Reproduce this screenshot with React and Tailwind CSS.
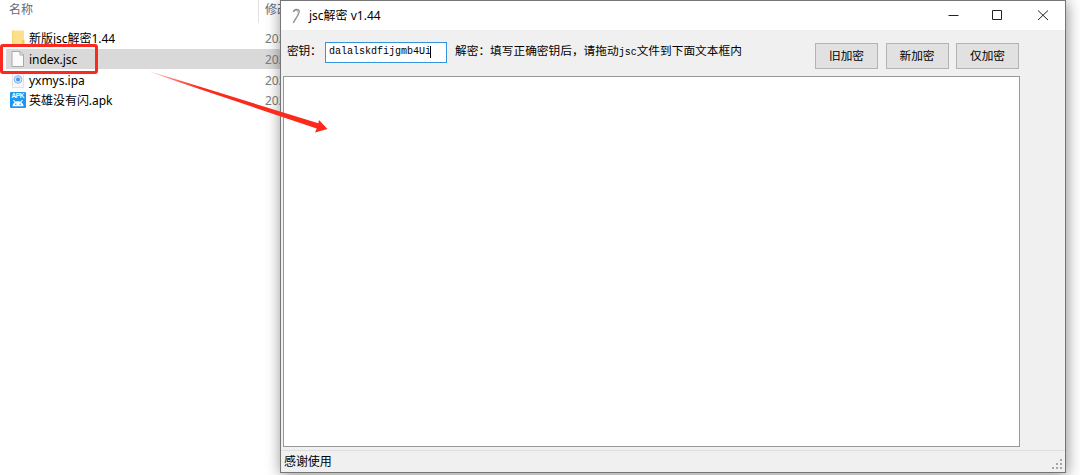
import React from "react";

const FolderIcon = () => (
  <svg width="16" height="16" viewBox="0 0 16 16">
    <path d="M2 .5h12v14.500H2z" fill="#ffe08a" />
    <path d="M12 10h2.500v5H12z" fill="#f3c95c" />
    <path d="M2 .5h1.200v14.500H2z" fill="#f8d675" />
  </svg>
);

const FileIcon = () => (
  <svg width="16" height="16" viewBox="0 0 16 16">
    <path d="M2 .5h8l3.500 3.500v11.500H2z" fill="#fafafa" stroke="#a0a0a0" strokeWidth=".9" />
    <path d="M10 .5v3.500h3.500" fill="none" stroke="#a0a0a0" strokeWidth=".9" />
  </svg>
);

const IpaIcon = () => (
  <svg width="16" height="16" viewBox="0 0 16 16">
    <path d="M2.500 .5h8l3 3v12h-11z" fill="#f7f7f7" stroke="#dcdcdc" strokeWidth=".8" />
    <circle cx="8" cy="7.500" r="3.800" fill="#d6e7fb" stroke="#7fb4f3" strokeWidth="1" />
    <rect x="6.200" y="5.700" width="3.600" height="3.600" rx="1" fill="#4c93ea" />
  </svg>
);

const ApkIcon = () => (
  <svg width="16" height="16" viewBox="0 0 16 16">
    <rect width="16" height="16" rx="1" fill="#1e96f0" />
    <text
      x="8"
      y="6.3"
      textAnchor="middle"
      textLength="13"
      fontSize="6.5"
      fontWeight="700"
      fontFamily="Liberation Sans, sans-serif"
      fill="#fff"
    >
      APK
    </text>
    <path d="M2.500 14.300a5.500 5 0 0 1 11 0z" fill="#fff" />
    <path d="M3.500 8l2 2.500M12.500 8l-2 2.500" stroke="#fff" strokeWidth="1.100" />
    <circle cx="5.800" cy="12.300" r=".7" fill="#1e96f0" />
    <circle cx="10.200" cy="12.300" r=".7" fill="#1e96f0" />
  </svg>
);

const files = [
  { name: "新版jsc解密1.44", icon: <FolderIcon /> },
  { name: "index.jsc", icon: <FileIcon />, selected: true },
  { name: "yxmys.ipa", icon: <IpaIcon /> },
  { name: "英雄没有闪.apk", icon: <ApkIcon /> },
];

const FileList = () => (
  <div className="w-[280px] shrink-0 overflow-hidden">
    <div className="flex h-[28px] text-[#5d6b82]">
      <div className="h-[23px] w-[259px] shrink-0 border-r border-[#e2e2e2] pl-[9px] leading-[19px]">
        名称
      </div>
      <div className="pl-[6px] leading-[19px] whitespace-nowrap">修改</div>
    </div>
    {files.map((file) => (
      <div key={file.name} className="flex h-[20.7px] pl-[6px]">
        <div
          className={`flex w-full items-center pl-[4px] ${file.selected ? "bg-[#d9d9d9]" : ""}`}
        >
          <div className="w-[19px] shrink-0">{file.icon}</div>
          <div className="relative z-10 mt-[2px] w-[236px] shrink-0 tracking-[-0.03px] text-black">
            {file.name}
          </div>
          <div className="mt-[2px] text-[#7d7d7d]">202</div>
        </div>
      </div>
    ))}
  </div>
);

const TitleBar = () => (
  <div className="flex h-[29px] shrink-0 items-center bg-white pl-[8px]">
    <svg width="16" height="18" viewBox="0 0 16 18">
      <path
        d="M4.500 5c0-3.500 6-3.500 5.700-.3C10 7 7 11 4.200 16"
        fill="none"
        stroke="#8b9689"
        strokeWidth="1.400"
      />
      <path d="M5.500 4.500c1-2 3.500-1.500 3 .8" fill="none" stroke="#59655a" strokeWidth=".6" />
    </svg>
    <div className="ml-[4px] grow text-black">jsc解密 v1.44</div>
    <svg width="117" height="12" viewBox="0 0 117 12" fill="none" stroke="#222">
      <path d="M.5 5.500h10" />
      <path d="M44.500 .5h9v9h-9z" />
      <path d="M90 .5l10 9.500M100 .5L90 10" />
    </svg>
  </div>
);

const Button = ({ children }) => (
  <button className="h-[26px] w-[63px] border border-[#b1b4b1] bg-[#e1e1e1] text-center leading-[26px]">
    {children}
  </button>
);

const ToolBar = () => (
  <div className="flex h-[46px] shrink-0 items-start pl-[6px] font-['Liberation_Mono','Noto_Sans_CJK_SC',monospace] text-[11.7px] text-black">
    <div className="mt-[12px] w-[38px] leading-[21px] whitespace-nowrap tracking-[-0.2px]">
      密钥：
    </div>
    <div className="mt-[12px] flex h-[21px] w-[122px] items-center border border-[#3393df] bg-white pl-[3px]">
      <span className="mb-[2px] text-[10px] text-black">dalalskdfijgmb4Ui</span>
      <span className="mb-[1px] -ml-[1px] h-[12px] w-px bg-black"></span>
    </div>
    <div className="mt-[12px] ml-[8px] w-[360px] leading-[21px] whitespace-nowrap">
      解密：填写正确密钥后，请拖动
      <span className="text-[10px]">jsc</span>
      文件到下面文本框内
    </div>
    <div className="mt-[13px] flex gap-[7.5px]">
      <Button>旧加密</Button>
      <Button>新加密</Button>
      <Button>仅加密</Button>
    </div>
  </div>
);

const StatusBar = () => (
  <div className="flex h-[22px] items-center justify-between border-t border-[#dedede] pr-[2px] pl-[3px] text-black">
    <span className="mt-[1px] tracking-[-0.1px]">感谢使用</span>
    <svg width="11" height="11" viewBox="0 0 11 11" fill="#a5a5a5" className="mt-[6px]">
      <path d="M8 0h2v2H8zM8 4h2v2H8zM4 4h2v2H4zM8 8h2v2H8zM4 8h2v2H4zM0 8h2v2H0z" />
    </svg>
  </div>
);

const DecryptWindow = () => (
  <div className="flex h-[473px] w-[786px] shrink-0 flex-col border border-[#767676] bg-[#f0f0f0] shadow-[1px_2px_14px_rgba(0,0,0,0.45)]">
    <TitleBar />
    <ToolBar />
    <div className="mb-[3px] ml-[2px] h-[371px] w-[737px] shrink-0 border border-[#999] bg-white"></div>
    <StatusBar />
  </div>
);

const App = () => {
  return (
    <div className="relative flex h-[475px] w-[1080px] overflow-hidden bg-white font-['Noto_Sans','Noto_Sans_CJK_SC',sans-serif] text-[12px]">
      <FileList />
      <DecryptWindow />
      <div className="absolute top-[44px] left-0 z-20 h-[30px] w-[98px] rounded-[3px] border-[3px] border-[#fb2a20]"></div>
      <svg className="absolute top-0 left-0" width="340" height="140" viewBox="0 0 340 140">
        <defs>
          <linearGradient id="arrow" x1="147" y1="71" x2="200" y2="88" gradientUnits="userSpaceOnUse">
            <stop offset="0" stopColor="#fb2a1c" stopOpacity=".3" />
            <stop offset="1" stopColor="#fb2a1c" />
          </linearGradient>
        </defs>
        <path
          d="M148 71L180 80.500L318.300 123.300L319 120L327.500 129L315 132.500L316.700 128.500L180 82.500Z"
          fill="url(#arrow)"
        />
      </svg>
    </div>
  );
};

export default App;
